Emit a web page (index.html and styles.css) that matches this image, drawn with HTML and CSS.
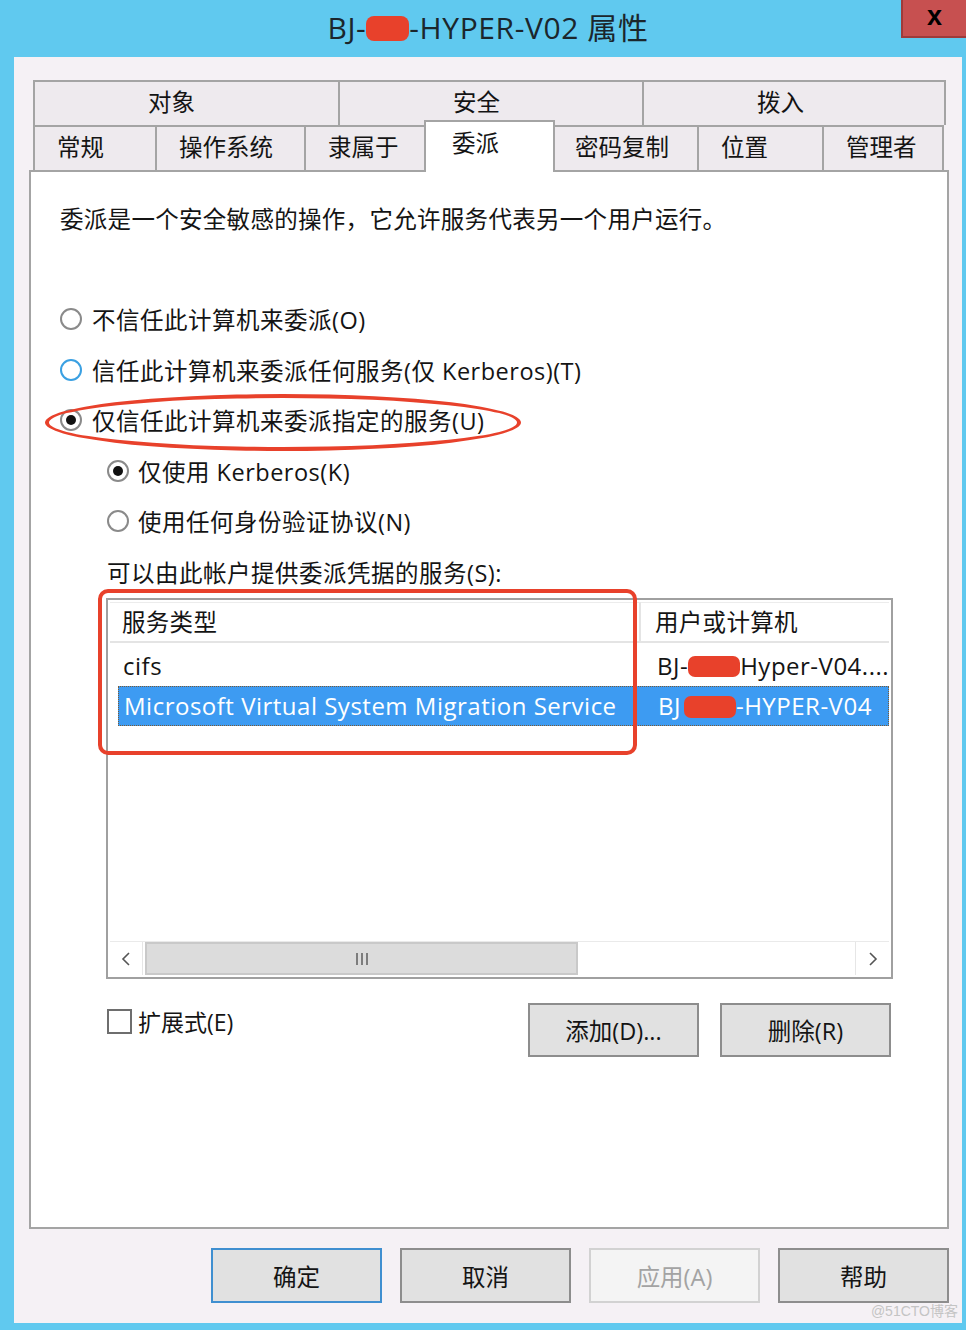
FILE: index.html
```html
<!DOCTYPE html>
<html lang="zh-CN">
<head>
<meta charset="utf-8">
<title>属性</title>
<link rel="stylesheet" href="styles.css">
</head>
<body>
<div class="window">
  <div class="titlebar">
    <div class="title">BJ-<span class="redact redact-title"></span>-HYPER-V02 属性</div>
    <div class="close">x</div>
  </div>
  <div class="client">
    <div class="tabs">
      <div class="tabrow back">
        <div class="tab b1">对象</div>
        <div class="tab b2">安全</div>
        <div class="tab b3 last">拨入</div>
      </div>
      <div class="tabrow front">
        <div class="tab f1">常规</div>
        <div class="tab f2">操作系统</div>
        <div class="tab f3">隶属于</div>
        <div class="tab f4 selected">委派</div>
        <div class="tab f5">密码复制</div>
        <div class="tab f6">位置</div>
        <div class="tab f7 last">管理者</div>
      </div>
    </div>
    <div class="panel">
      <div class="desc">委派是一个安全敏感的操作，它允许服务代表另一个用户运行。</div>
      <div class="options">
        <div class="opt"><span class="radio"></span>不信任此计算机来委派(O)</div>
        <div class="opt"><span class="radio hover"></span>信任此计算机来委派任何服务(仅 Kerberos)(T)</div>
        <div class="opt"><span class="radio on"></span>仅信任此计算机来委派指定的服务(U)</div>
        <div class="opt sub"><span class="radio on"></span>仅使用 Kerberos(K)</div>
        <div class="opt sub"><span class="radio"></span>使用任何身份验证协议(N)</div>
        <div class="opt sub label">可以由此帐户提供委派凭据的服务(S):</div>
      </div>
      <div class="list">
        <div class="lhead">
          <div class="hc c1">服务类型</div>
          <div class="hc c2">用户或计算机</div>
        </div>
        <div class="lrow r1">
          <div class="rc c1">cifs</div>
          <div class="rc c2">BJ-<span class="redact redact-a"></span>Hyper-V04....</div>
        </div>
        <div class="lrow r2 sel">
          <div class="rc c1">Microsoft Virtual System Migration Service</div>
          <div class="rc c2">BJ<span class="redact redact-b"></span>-HYPER-V04</div>
        </div>
        <div class="lfill"></div>
        <div class="hscroll">
          <div class="sbtn"><svg width="12" height="16" viewBox="0 0 12 16"><polyline points="9,2 3,8 9,14" fill="none" stroke="#555" stroke-width="1.6"/></svg></div>
          <div class="thumb"><svg width="14" height="14" viewBox="0 0 14 14"><path d="M2 1v12M7 1v12M12 1v12" stroke="#666" stroke-width="1.6"/></svg></div>
          <div class="track"></div>
          <div class="sbtn right"><svg width="12" height="16" viewBox="0 0 12 16"><polyline points="3,2 9,8 3,14" fill="none" stroke="#555" stroke-width="1.6"/></svg></div>
        </div>
      </div>
      <div class="actions">
        <div class="check"><span class="cb"></span>扩展式(E)</div>
        <div class="btns">
          <div class="btn">添加(D)...</div>
          <div class="btn">删除(R)</div>
        </div>
      </div>
      <div class="mark-ellipse"></div>
      <div class="mark-rect"></div>
    </div>
    <div class="footer">
      <div class="btn default">确定</div>
      <div class="btn">取消</div>
      <div class="btn disabled">应用(A)</div>
      <div class="btn">帮助</div>
    </div>
    <div class="watermark">@51CTO博客</div>
  </div>
</div>
</body>
</html>
```

FILE: styles.css
```css
* { box-sizing: border-box; }
html, body { margin: 0; padding: 0; }
body {
  width: 966px;
  height: 1330px;
  overflow: hidden;
  background: #60c9ef;
  font-family: "Open Sans", "Noto Sans CJK SC", sans-serif;
  color: #141414;
}
.window {
  width: 966px;
  height: 1330px;
  display: flex;
  flex-direction: column;
  position: relative;
}
.titlebar {
  height: 57px;
  flex: none;
  display: flex;
  align-items: center;
  justify-content: center;
  position: relative;
}
.title {
  font-size: 30px;
  color: #1b262c;
  margin-left: 10px;
  margin-top: -6px;
  letter-spacing: 0.6px;
  white-space: nowrap;
}
.redact {
  display: inline-block;
  background: #e8412b;
  border-radius: 8px;
  vertical-align: middle;
}
.redact-title { width: 43px; height: 25px; margin: -4px 0 0; }
.close {
  position: absolute;
  top: 0;
  right: 0;
  width: 65px;
  height: 38px;
  background: #c75050;
  border-left: 2px solid #9e3b3b;
  border-bottom: 2px solid #9e3b3b;
  font: bold 27px "Liberation Sans", sans-serif;
  color: #000;
  display: flex;
  align-items: center;
  justify-content: center;
  padding-bottom: 4px;
}
.client {
  margin-left: 14px;
  width: 948px;
  height: 1266px;
  flex: none;
  background: #f5f1f5;
  position: relative;
  padding-top: 23px;
  display: flex;
  flex-direction: column;
}
.tabs {
  margin-left: 19px;
  width: 913px;
  position: relative;
  z-index: 2;
}
.tabrow {
  display: flex;
  height: 45px;
}
.tab {
  height: 45px;
  background: #eeeaee;
  border-top: 2px solid #a4a4a4;
  border-left: 2px solid #a4a4a4;
  font-size: 23.5px;
  line-height: 41px;
  white-space: nowrap;
  flex: none;
}
.tab.last { border-right: 2px solid #a4a4a4; }
.back .tab { padding-left: 113px; }
.b1 { width: 305px; }
.b2 { width: 304px; }
.b3 { width: 304px; }
.front .tab { padding-left: 22px; }
.f1 { width: 122px; }
.f2 { width: 149px; }
.f3 { width: 120px; }
.f4 { width: 131px; }
.f5 { width: 144px; padding-left: 20px !important; }
.f6 { width: 125px; }
.f7 { width: 122px; }
.tab.selected {
  align-self: flex-end;
  height: 52px;
  margin-bottom: -2px;
  background: #fff;
  border-right: 2px solid #a4a4a4;
  margin-right: -2px;
  padding-left: 26px !important;
  line-height: 42px;
}
.panel {
  margin-left: 15px;
  width: 920px;
  height: 1059px;
  flex: none;
  border: 2px solid #a4a4a4;
  background: #fff;
  position: relative;
  z-index: 1;
  padding: 27px 0 0 29px;
  display: flex;
  flex-direction: column;
}
.desc {
  height: 40px;
  line-height: 40px;
  font-size: 23.5px;
  letter-spacing: 0.3px;
  white-space: nowrap;
}
.options { margin-top: 55px; }
.opt {
  height: 50.5px;
  display: flex;
  align-items: center;
  font-size: 23.5px;
  letter-spacing: 0.5px;
  white-space: nowrap;
}
.opt.sub { padding-left: 47px; }
.radio {
  width: 22px;
  height: 22px;
  flex: none;
  border: 2px solid #8a8a8a;
  border-radius: 50%;
  background: #fff;
  margin-right: 10px;
  display: flex;
  align-items: center;
  justify-content: center;
}
.sub .radio { margin-right: 9px; }
.radio.hover { border-color: #3aa0e2; }
.radio.on::after {
  content: "";
  width: 10px;
  height: 10px;
  border-radius: 50%;
  background: #111;
}
.list {
  margin-left: 46px;
  margin-top: 1px;
  width: 787px;
  height: 381px;
  flex: none;
  border: 2px solid #a0a0a0;
  background: #fff;
  padding: 2px;
  display: flex;
  flex-direction: column;
}
.lhead {
  height: 40px;
  display: grid;
  grid-template-columns: 531px 248px;
  font-size: 23.5px;
  letter-spacing: 0.3px;
}
.hc {
  border-top: 1px solid #ececec;
  border-bottom: 2px solid #e4e4e4;
  line-height: 38px;
  padding-left: 12px;
  white-space: nowrap;
}
.hc.c1 { border-right: 2px solid #e4e4e4; }
.hc.c2 { padding-left: 14px; }
.lrow {
  margin-left: 8px;
  display: grid;
  grid-template-columns: 523px 248px;
  font-size: 24px;
  letter-spacing: 0.5px;
  white-space: nowrap;
}
.lrow .c1 { padding-left: 5px; }
.lrow .c2 { padding-left: 16px; overflow: hidden; }
.r1 { margin-top: 3px; height: 41px; line-height: 41px; }
.r2 { height: 40px; line-height: 38px; }
.sel {
  background: #3d9bf2;
  color: #fff;
  border: 1px dotted #7a5a36;
}
.redact-a { width: 52px; height: 21px; border-radius: 7px; margin-top: -4px; }
.redact-b { width: 52px; height: 22px; border-radius: 7px; margin: -4px 0 0 3px; }
.lfill { flex: 1; }
.hscroll {
  height: 34px;
  display: flex;
  background: #fff;
  border-top: 1px solid #eaeaea;
}
.sbtn {
  width: 33px;
  flex: none;
  display: flex;
  align-items: center;
  justify-content: center;
  border-right: 1px solid #e6e6e6;
}
.sbtn.right { width: 34px; border-right: none; border-left: 1px solid #e6e6e6; }
.thumb {
  width: 433px;
  margin-left: 2px;
  flex: none;
  background: #dcdcdc;
  border: 2px solid #c9c9c9;
  display: flex;
  align-items: center;
  justify-content: center;
}
.track { flex: 1; }
.actions {
  margin-top: 24px;
  margin-left: 46px;
  width: 787px;
  display: flex;
  justify-content: space-between;
  align-items: flex-start;
}
.check {
  display: flex;
  align-items: center;
  margin-top: 1px;
  font-size: 23px;
  white-space: nowrap;
}
.cb {
  width: 25px;
  height: 25px;
  border: 2px solid #6e6e6e;
  background: #fff;
  margin-left: 1px;
  margin-right: 6px;
}
.btns {
  display: flex;
  gap: 21px;
  margin-right: 2px;
}
.btn {
  width: 171px;
  height: 54px;
  flex: none;
  background: #e1e1e1;
  border: 2px solid #8d8d8d;
  font-size: 23.5px;
  display: flex;
  align-items: center;
  justify-content: center;
  white-space: nowrap;
}
.footer {
  display: flex;
  justify-content: flex-end;
  gap: 18px;
  margin-top: 19px;
  padding-right: 13px;
}
.footer .btn { height: 55px; }
.btn.default { border-color: #3f8fd0; }
.btn.disabled {
  background: #f4f4f4;
  border-color: #d2d2d2;
  color: #a3a3a3;
}
.mark-ellipse {
  position: absolute;
  left: 14px;
  top: 222px;
  width: 476px;
  height: 57px;
  border: 4px solid #e8412b;
  border-radius: 50%;
  pointer-events: none;
}
.mark-rect {
  position: absolute;
  left: 67px;
  top: 417px;
  width: 539px;
  height: 166px;
  border: 4px solid #e8412b;
  border-radius: 10px;
  pointer-events: none;
}
.watermark {
  position: absolute;
  right: 4px;
  bottom: 3px;
  font-size: 14px;
  color: #c4c4c4;
  font-family: "Liberation Sans", "Noto Sans CJK SC", sans-serif;
}
```
